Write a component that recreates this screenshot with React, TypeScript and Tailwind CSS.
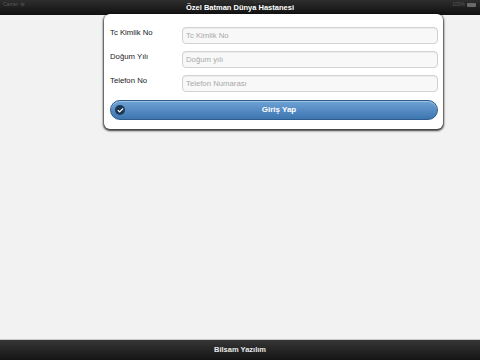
import { Check, Wifi } from 'lucide-react';

const fields = [
  { label: 'Tc Kimlik No', placeholder: 'Tc Kimlik No' },
  { label: 'Doğum Yılı', placeholder: 'Doğum yılı' },
  { label: 'Telefon No', placeholder: 'Telefon Numarası' },
];

export default function App(): JSX.Element {
  return (
    <div className="w-[480px] h-[360px] flex flex-col bg-[#f2f2f2] font-['Liberation_Sans',Arial,sans-serif] overflow-hidden">
      {/* nav bar with status overlay */}
      <header className="relative h-[15px] shrink-0 bg-gradient-to-b from-[#2e2e2e] to-[#111] flex items-center justify-center">
        <div className="absolute left-[3px] top-[1px] flex items-center gap-[2px] text-[5px] text-[#5a5a5a]">
          <span>Carrier</span>
          <Wifi size={5} strokeWidth={3} />
        </div>
        <div className="absolute left-[252px] top-[-1px] text-[4px] text-[#444]">12:42 PM</div>
        <div className="absolute right-[4px] top-[1px] flex items-center gap-[2px] text-[5px] text-[#5a5a5a]">
          <span>100%</span>
          <span className="w-[9px] h-[4px] bg-[#6a6a6a] rounded-[1px]" />
        </div>
        <span className="text-[7.5px] font-bold text-white leading-none pt-[1px]">Özel Batman Dünya Hastanesi</span>
      </header>

      <main className="flex-1 relative">
        <div className="ml-[104px] mt-[-1px] w-[339px] bg-white rounded-[6px] shadow-[0_1px_2px_1px_rgba(0,0,0,0.75)] pl-[6px] pr-[5px] pt-[13px] pb-[9px] flex flex-col">
          <div className="flex flex-col gap-[7px]">
            {fields.map((f) => (
              <div key={f.label} className="flex items-center">
                <div className="w-[72px] text-[7.75px] text-[#222] leading-none -mt-[5px]">{f.label}</div>
                <input
                  className="flex-1 h-[17px] rounded-[4px] border border-[#d2d2d2] bg-[#f8f8f8] px-[3px] text-[7.75px] placeholder:text-[#a8a8a8] outline-none shadow-[inset_0_1px_1px_rgba(0,0,0,0.05)]"
                  placeholder={f.placeholder}
                />
              </div>
            ))}
          </div>
          <button className="mt-[8px] h-[20px] relative rounded-full border border-[#2e5c8c] bg-gradient-to-b from-[#6ea3d6] to-[#3d75b0] flex items-center justify-center pl-[10px] text-white text-[8px] font-bold shadow-[inset_0_1px_0_rgba(255,255,255,0.35)]">
            <span className="absolute left-[4px] top-1/2 -translate-y-1/2 w-[10px] h-[10px] rounded-full bg-[#1e3650] flex items-center justify-center">
              <Check size={7} strokeWidth={4} className="text-white" />
            </span>
            Giriş Yap
          </button>
        </div>
      </main>

      <footer className="h-[21px] shrink-0 border-t border-[#c8c8c8] bg-gradient-to-b from-[#363636] to-[#151515] flex items-center justify-center">
        <span className="text-[7.5px] font-bold text-[#e8e8e8] leading-none">Bilsam Yazılım</span>
      </footer>
    </div>
  );
}
